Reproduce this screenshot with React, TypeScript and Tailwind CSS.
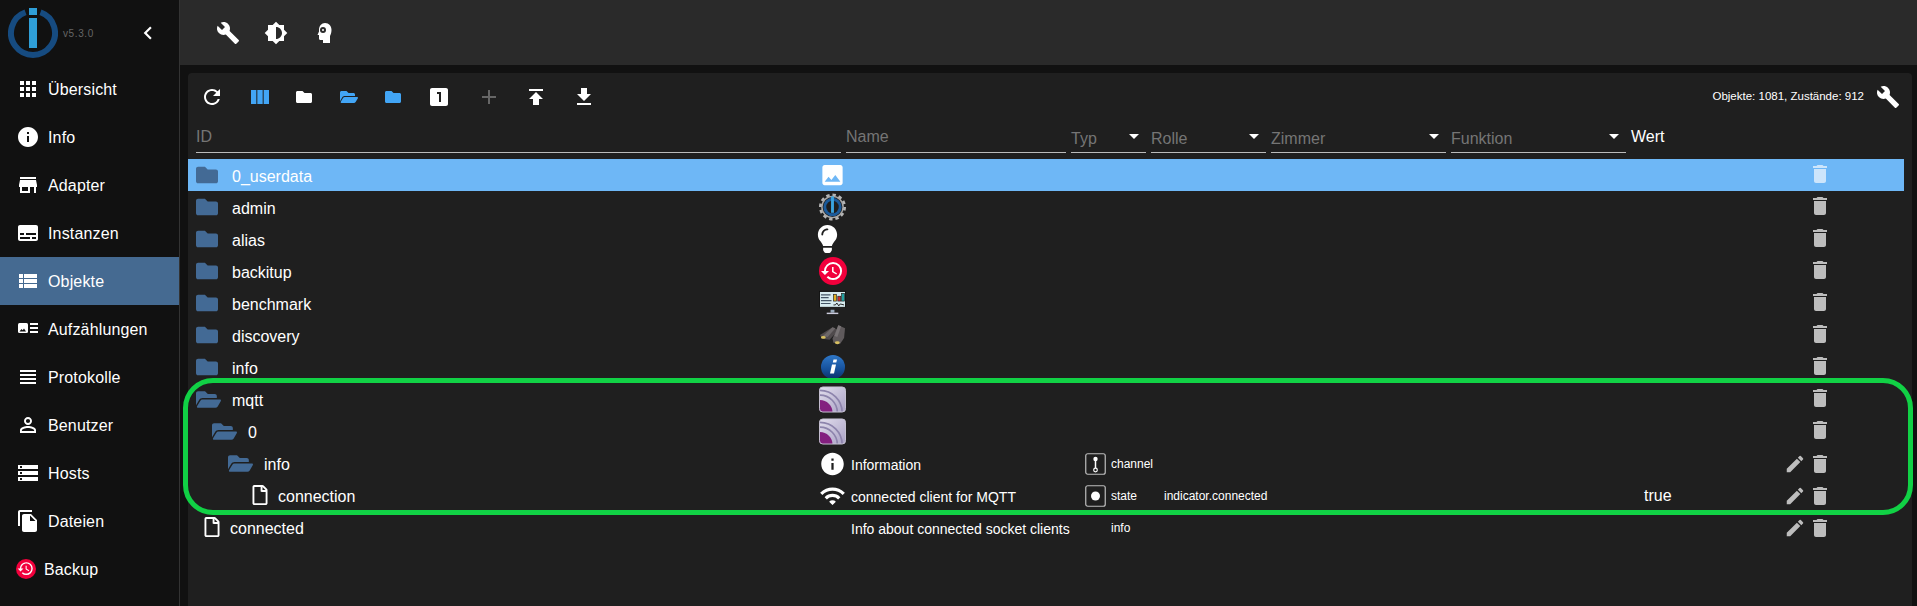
import type { ReactNode } from 'react';
import { FaFolder, FaFolderOpen, FaRegFile, FaLightbulb } from 'react-icons/fa';
import {
  MdApps, MdInfo, MdStore, MdSubtitles, MdViewList, MdViewHeadline, MdPersonOutline, MdStorage, MdFileCopy,
  MdBuild, MdBrightness6, MdRefresh, MdViewColumn, MdLooksOne, MdAdd, MdPublish, MdGetApp, MdPhoto,
  MdDelete, MdEdit, MdWifi, MdChevronLeft, MdArrowDropDown, MdHistory,
} from 'react-icons/md';

function Logo() {
  return (
    <svg width="50" height="50" viewBox="0 0 50 50" className="shrink-0">
      <path d="M17.500 4.200 A22 22 0 1 0 32.500 4.200" fill="none" stroke="#164b80" strokeWidth="6" />
      <rect x="21" y="0" width="8" height="7" fill="#2f9fd8" />
      <rect x="21" y="10" width="8" height="30" fill="#2f9fd8" />
    </svg>
  );
}

function HeadIcon() {
  return (
    <svg width="24" height="24" viewBox="0 0 24 24">
      <path d="M13 2c4 0 6.500 3 6.500 7 0 3-1 5-1.500 6v7H11v-3H8.500c-1 0-1.500-.7-1.500-1.500V14H5.500L7 10.500V9c0-4 2.500-7 6-7z" fill="#fff" />
      <circle cx="11" cy="9" r="3" fill="#2a2a2a" />
      <circle cx="11" cy="9" r="1" fill="#fff" />
    </svg>
  );
}

function EnumIcon() {
  return (
    <svg width="24" height="24" viewBox="0 0 24 24">
      <rect x="2" y="6" width="10" height="10" rx="1.500" fill="#fff" />
      <path d="M3.500 14.500l2-2.500 1.200 1.200 1.300-1.700 2 3z" fill="#111" />
      <path d="M14 6h8v2h-8zM14 10h8v2h-8zM14 14h8v2h-8z" fill="#fff" />
    </svg>
  );
}

function BackupIcon({ size }: { size: number }) {
  return (
    <span className="flex shrink-0 items-center justify-center rounded-full bg-[#f2003c] text-white" style={{ width: size, height: size }}>
      <MdHistory size={size * 0.86} />
    </span>
  );
}

function AdminIcon() {
  return (
    <svg width="28" height="28" viewBox="0 0 28 28">
      <circle cx="14" cy="14" r="12.500" fill="none" stroke="#b5b5b5" strokeWidth="3" strokeDasharray="3.500 3" />
      <circle cx="14" cy="14" r="11" fill="none" stroke="#a8a8a8" strokeWidth="1.500" />
      <circle cx="14" cy="14" r="8" fill="#1f1f1f" stroke="#1b5a9a" strokeWidth="3" />
      <rect x="12.500" y="3" width="3" height="17" fill="#3aa4e0" />
    </svg>
  );
}

function BenchmarkIcon() {
  return (
    <svg width="28" height="26" viewBox="0 0 28 26">
      <rect x="0.500" y="1" width="27" height="17" fill="#d8ecf0" stroke="#111" />
      <rect x="0.500" y="17" width="27" height="3" fill="#222" />
      <path d="M2 4.500h10M2 7.500h8M2 10.500h11M2 13.500h10" stroke="#456" strokeWidth="1.200" />
      <rect x="15" y="4" width="3" height="7" fill="#e0b020" stroke="#222" strokeWidth=".7" />
      <rect x="19.500" y="6" width="3" height="5" fill="#d03030" stroke="#222" strokeWidth=".7" />
      <rect x="23.500" y="3" width="3" height="8" fill="#20a0a0" stroke="#222" strokeWidth=".7" />
      <path d="M15 15l2 0 1.500-2 2 3 1.500-2 4 1" fill="none" stroke="#222" strokeWidth="1" />
      <rect x="12" y="20" width="4" height="3" fill="#9ab" />
      <rect x="8" y="23" width="12" height="1.500" fill="#ccd" />
    </svg>
  );
}

function BinocularsIcon() {
  return (
    <svg width="28" height="24" viewBox="0 0 28 24">
      <path d="M14 4l6 3-9 10-8-1-2-4z" fill="#4f4a4c" />
      <path d="M20 2l7 3-1 10-4 6-7-1-1-4z" fill="#5f5a5c" />
      <path d="M14 4l3 1-8 9-5-1z" fill="#6c6769" />
      <path d="M20 2l3 1-4 11-3-1z" fill="#787375" />
      <ellipse cx="4.500" cy="14.500" rx="2.500" ry="1.500" fill="#d8c060" />
      <ellipse cx="19" cy="20" rx="2.500" ry="1.500" fill="#d8c060" />
    </svg>
  );
}

function InfoBallIcon() {
  return (
    <svg width="26" height="26" viewBox="0 0 26 26">
      <defs>
        <linearGradient id="ball" x1="0" y1="0" x2="0" y2="1">
          <stop offset="0" stopColor="#2f78c8" />
          <stop offset="0.6" stopColor="#15509c" />
          <stop offset="1" stopColor="#0c2f66" />
        </linearGradient>
      </defs>
      <circle cx="13" cy="13" r="12" fill="url(#ball)" />
      <path d="M12 10.500h4l-2 9h-4zM13.500 5.500h3.500l-.7 3h-3.500z" fill="#fff" />
    </svg>
  );
}

function MqttIcon() {
  return (
    <svg width="28" height="27" viewBox="0 0 28 27">
      <defs>
        <linearGradient id="mqttBg" x1="0" y1="0" x2="1" y2="1">
          <stop offset="0" stopColor="#e4e0ee" />
          <stop offset="1" stopColor="#a8a0c4" />
        </linearGradient>
        <clipPath id="mqttClip"><rect x="0.500" y="0.500" width="27" height="26" rx="3.500" /></clipPath>
      </defs>
      <g clipPath="url(#mqttClip)">
        <rect width="28" height="27" fill="url(#mqttBg)" />
        <circle cx="1" cy="27" r="13" fill="#83207f" />
        <circle cx="1" cy="27" r="18" fill="none" stroke="#8d84ac" strokeWidth="1.800" />
        <circle cx="1" cy="27" r="23" fill="none" stroke="#8d84ac" strokeWidth="1.800" />
      </g>
      <rect x="0.500" y="0.500" width="27" height="26" rx="3.500" fill="none" stroke="#c8c4d4" />
    </svg>
  );
}

function ChannelIcon() {
  return (
    <svg width="21" height="22" viewBox="0 0 21 22">
      <rect x="0.750" y="0.750" width="19.500" height="20.500" rx="2" fill="none" stroke="#bdbdbd" strokeWidth="1.200" />
      <circle cx="10.500" cy="6" r="2.200" fill="#fff" />
      <path d="M10.500 6v9" stroke="#fff" strokeWidth="1.500" />
      <circle cx="10.500" cy="17" r="1.800" fill="none" stroke="#fff" strokeWidth="1.200" />
    </svg>
  );
}

function StateIcon() {
  return (
    <svg width="21" height="22" viewBox="0 0 21 22">
      <rect x="0.750" y="0.750" width="19.500" height="20.500" rx="2" fill="none" stroke="#bdbdbd" strokeWidth="1.200" />
      <circle cx="10.500" cy="11" r="4.500" fill="#fff" />
    </svg>
  );
}

const navItems: { label: string; icon: ReactNode; active?: boolean }[] = [
  { label: 'Übersicht', icon: <MdApps size={24} /> },
  { label: 'Info', icon: <MdInfo size={24} /> },
  { label: 'Adapter', icon: <MdStore size={24} /> },
  { label: 'Instanzen', icon: <MdSubtitles size={24} /> },
  { label: 'Objekte', icon: <MdViewList size={24} />, active: true },
  { label: 'Aufzählungen', icon: <EnumIcon /> },
  { label: 'Protokolle', icon: <MdViewHeadline size={24} /> },
  { label: 'Benutzer', icon: <MdPersonOutline size={24} /> },
  { label: 'Hosts', icon: <MdStorage size={24} /> },
  { label: 'Dateien', icon: <MdFileCopy size={24} /> },
];

const toolbar: { icon: ReactNode; w: string }[] = [
  { icon: <MdRefresh size={24} className="text-white" />, w: 'w-[48px]' },
  { icon: <MdViewColumn size={24} className="text-[#42a5f5]" />, w: 'w-[48px]' },
  { icon: <FaFolder size={16} className="text-white" />, w: 'w-[40px]' },
  { icon: <FaFolderOpen size={18} className="text-[#42a5f5]" />, w: 'w-[50px]' },
  { icon: <FaFolder size={16} className="text-[#42a5f5]" />, w: 'w-[38px]' },
  { icon: <MdLooksOne size={24} className="text-white" />, w: 'w-[54px]' },
  { icon: <MdAdd size={24} className="text-[#666]" />, w: 'w-[46px]' },
  { icon: <MdPublish size={24} className="text-white" />, w: 'w-[48px]' },
  { icon: <MdGetApp size={24} className="text-white" />, w: 'w-[48px]' },
];

const filters = [
  { label: 'Typ', w: 'w-[75px]' },
  { label: 'Rolle', w: 'w-[115px]' },
  { label: 'Zimmer', w: 'w-[175px]' },
  { label: 'Funktion', w: 'w-[175px]' },
];

type Row = {
  id: string;
  kind: 'folder' | 'open' | 'file';
  indent: string;
  gap: string;
  icon?: ReactNode;
  name?: string;
  typeIcon?: ReactNode;
  type?: string;
  role?: string;
  value?: string;
  edit?: boolean;
  selected?: boolean;
};

const rows: Row[] = [
  { id: '0_userdata', kind: 'folder', indent: 'pl-[8px]', gap: 'w-[36px]', icon: <MdPhoto size={28} className="text-white" />, selected: true },
  { id: 'admin', kind: 'folder', indent: 'pl-[8px]', gap: 'w-[36px]', icon: <AdminIcon /> },
  { id: 'alias', kind: 'folder', indent: 'pl-[8px]', gap: 'w-[36px]', icon: <FaLightbulb size={28} className="-translate-x-[5px] text-white" /> },
  { id: 'backitup', kind: 'folder', indent: 'pl-[8px]', gap: 'w-[36px]', icon: <BackupIcon size={28} /> },
  { id: 'benchmark', kind: 'folder', indent: 'pl-[8px]', gap: 'w-[36px]', icon: <BenchmarkIcon /> },
  { id: 'discovery', kind: 'folder', indent: 'pl-[8px]', gap: 'w-[36px]', icon: <BinocularsIcon /> },
  { id: 'info', kind: 'folder', indent: 'pl-[8px]', gap: 'w-[36px]', icon: <InfoBallIcon /> },
  { id: 'mqtt', kind: 'open', indent: 'pl-[8px]', gap: 'w-[36px]', icon: <MqttIcon /> },
  { id: '0', kind: 'open', indent: 'pl-[24px]', gap: 'w-[36px]', icon: <MqttIcon /> },
  { id: 'info', kind: 'open', indent: 'pl-[40px]', gap: 'w-[36px]', icon: <MdInfo size={28} className="translate-y-[1px] text-white" />, name: 'Information', typeIcon: <ChannelIcon />, type: 'channel', edit: true },
  { id: 'connection', kind: 'file', indent: 'pl-[62px]', gap: 'w-[28px]', icon: <MdWifi size={28} className="translate-y-[1px] text-white" />, name: 'connected client for MQTT', typeIcon: <StateIcon />, type: 'state', role: 'indicator.connected', value: 'true', edit: true },
  { id: 'connected', kind: 'file', indent: 'pl-[14px]', gap: 'w-[28px]', name: 'Info about connected socket clients', type: 'info', edit: true },
];

function ObjectRow({ row }: { row: Row }) {
  const folderColor = 'text-[#436a95]';
  return (
    <div className={`flex h-[32px] items-center text-white ${row.selected ? 'bg-[#6eb7f6]' : ''}`}>
      <div className={`flex w-[631px] items-center text-[16px] ${row.indent}`}>
        <span className={`flex items-center ${row.gap}`}>
          {row.kind === 'folder' && <FaFolder size={22} className={folderColor} />}
          {row.kind === 'open' && <FaFolderOpen size={25} className={folderColor} />}
          {row.kind === 'file' && <FaRegFile size={20} className="text-white" />}
        </span>
        <span className="pt-[4px]">{row.id}</span>
      </div>
      <div className="flex w-[27px] items-center justify-center">{row.icon}</div>
      <div className="w-[225px] pl-[5px] pt-[4px] text-[14px]">{row.name}</div>
      <div className="flex w-[93px] items-center gap-[5px] pl-[14px] text-[12px]">
        <span className="flex w-[21px] translate-y-[1px] justify-center">{row.typeIcon}</span>
        <span className="pt-[2px]">{row.type}</span>
      </div>
      <div className="w-[480px] pt-[2px] text-[12px]">{row.role}</div>
      <div className="w-[143px] pt-[2px] text-[16px]">{row.value}</div>
      <div className="flex w-[26px] justify-start">
        {row.edit && <MdEdit size={22} className="-ml-[3px] mt-[2px] text-[#bdbdbd]" />}
      </div>
      <MdDelete size={24} className={`-ml-[5px] ${row.edit ? 'mt-[2px]' : '-mt-[2px]'} ${row.selected ? 'text-[#cde5fb]' : 'text-[#bdbdbd]'}`} />
    </div>
  );
}

export default function App() {
  return (
    <div className="relative flex h-[606px] w-[1917px] overflow-hidden bg-[#111111] font-['Liberation_Sans',Arial,sans-serif]">
      <aside className="flex w-[180px] shrink-0 flex-col border-r border-[#333333] bg-[#111111] text-white">
        <div className="flex h-[65px] items-center pl-[8px]">
          <Logo />
          <span className="ml-[5px] mt-[1px] text-[10px] tracking-[0.6px] text-[#666666]">v5.3.0</span>
          <MdChevronLeft size={26} className="ml-[41px] text-white" />
        </div>
        {navItems.map((item) => (
          <div key={item.label} className={`flex h-[48px] items-center gap-[8px] pl-[16px] text-[16px] tracking-[0.15px] ${item.active ? 'bg-[#456a91]' : ''}`}>
            {item.icon}
            <span className="pt-[2px]">{item.label}</span>
          </div>
        ))}
        <div className="flex h-[48px] items-center gap-[8px] pl-[16px] text-[16px] tracking-[0.15px]">
          <BackupIcon size={20} />
          <span className="pt-[2px]">Backup</span>
        </div>
      </aside>

      <main className="flex min-w-0 flex-1 flex-col">
        <div className="flex h-[65px] items-center gap-[24px] bg-[#2a2a2a] pl-[36px] text-white">
          <MdBuild size={24} />
          <MdBrightness6 size={24} />
          <HeadIcon />
        </div>

        <section className="ml-[8px] mr-[5px] mt-[8px] flex-1 rounded-t-[4px] bg-[#1f1f1f]">
          <div className="flex h-[48px] items-center pr-[12px]">
            {toolbar.map((tool, i) => (
              <span key={i} className={`flex justify-center ${tool.w}`}>{tool.icon}</span>
            ))}
            <span className="ml-auto text-[11.500px] text-white">Objekte: 1081, Zustände: 912</span>
            <MdBuild size={24} className="ml-[12px] text-white" />
          </div>

          <div className="flex h-[38px] gap-[5px] pl-[8px] pb-[6px]">
            <div className="flex w-[645px] items-end border-b border-[#bbbbbb] pb-[3px] text-[16px] text-[#757575]">ID</div>
            <div className="flex w-[220px] items-end border-b border-[#bbbbbb] pb-[3px] text-[16px] text-[#757575]">Name</div>
            {filters.map((f) => (
              <div key={f.label} className={`flex items-end justify-between border-b border-[#bbbbbb] pb-[1px] text-[16px] text-[#757575] ${f.w}`}>
                {f.label}
                <MdArrowDropDown size={24} className="mb-[3px] text-white" />
              </div>
            ))}
            <div className="flex items-center text-[16px] text-white">Wert</div>
          </div>

          <div className="w-[1716px]">
            {rows.map((row, i) => <ObjectRow key={i} row={row} />)}
          </div>
        </section>
      </main>

      <div className="pointer-events-none absolute left-[183px] top-[378px] h-[137px] w-[1730px] rounded-[30px] border-[5px] border-[#11d145]" />
    </div>
  );
}
